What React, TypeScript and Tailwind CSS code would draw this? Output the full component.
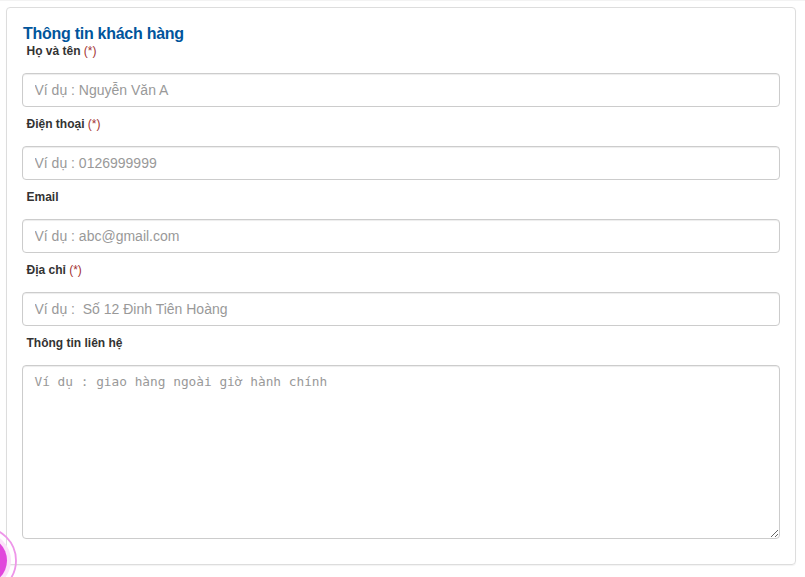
import { clsx } from 'clsx';

interface Field {
  name: string;
  label: string;
  placeholder: string;
  required?: boolean;
}

const fields: Field[] = [
  { name: 'name', label: 'Họ và tên', placeholder: 'Ví dụ : Nguyễn Văn A', required: true },
  { name: 'phone', label: 'Điện thoại', placeholder: 'Ví dụ : 0126999999', required: true },
  { name: 'email', label: 'Email', placeholder: 'Ví dụ : abc@gmail.com' },
  { name: 'address', label: 'Địa chỉ', placeholder: 'Ví dụ :  Số 12 Đinh Tiên Hoàng', required: true },
];

const controlClass =
  'block w-full rounded-[4px] border border-[#ccc] bg-white px-[11.5px] text-[#555] shadow-[inset_0_1px_1px_rgba(0,0,0,0.075)] outline-none placeholder:text-[#999] focus:border-[#66afe9]';

function FieldLabel({ field, first }: { field: Field; first?: boolean }) {
  return (
    <label
      htmlFor={field.name}
      className={clsx(
        'block pl-[4.5px] text-[12px] leading-[17px] font-bold text-[#333]',
        first ? 'pt-px pb-[13px]' : 'pt-[9px] pb-[13px]'
      )}
    >
      {field.label}
      {field.required && <span className="font-normal text-[#a33232]"> (*)</span>}
    </label>
  );
}

function CallBubble() {
  return (
    <svg className="fixed bottom-0 left-0" width="20" height="50" viewBox="0 0 20 50">
      <circle cx="-17" cy="33.5" r="33" fill="none" stroke="#ee96e9" strokeWidth="1.8" />
      <circle cx="-17" cy="33.5" r="28" fill="#fbe1fa" />
      <circle cx="-17" cy="33.5" r="24" fill="#e146dc" />
    </svg>
  );
}

export default function App() {
  return (
    <div className="h-[577px] overflow-hidden border-t border-[#f3f3f3] bg-white pt-[6px] pr-[9px] pl-[6px] font-['Liberation_Sans',Arial,sans-serif]">
      <form className="h-[558px] rounded-[4px] border border-[#ddd] px-[15px] pt-[17px] shadow-[0_1px_1px_rgba(0,0,0,0.05)]">
        <h3 className="pl-px text-[16px] leading-[17px] font-bold tracking-[-0.27px] text-[#00559c]">
          Thông tin khách hàng
        </h3>
        {fields.map((field, i) => (
          <div key={field.name}>
            <FieldLabel field={field} first={i === 0} />
            <input
              id={field.name}
              type="text"
              placeholder={field.placeholder}
              className={clsx(controlClass, 'h-[34px] text-[14px]')}
            />
          </div>
        ))}
        <FieldLabel field={{ name: 'note', label: 'Thông tin liên hệ', placeholder: '' }} />
        <textarea
          id="note"
          placeholder="Ví dụ : giao hàng ngoài giờ hành chính"
          className={clsx(
            controlClass,
            "h-[174px] resize py-[6px] font-['DejaVu_Sans_Mono',monospace] text-[12.8px] leading-5"
          )}
        />
      </form>
      <CallBubble />
    </div>
  );
}
